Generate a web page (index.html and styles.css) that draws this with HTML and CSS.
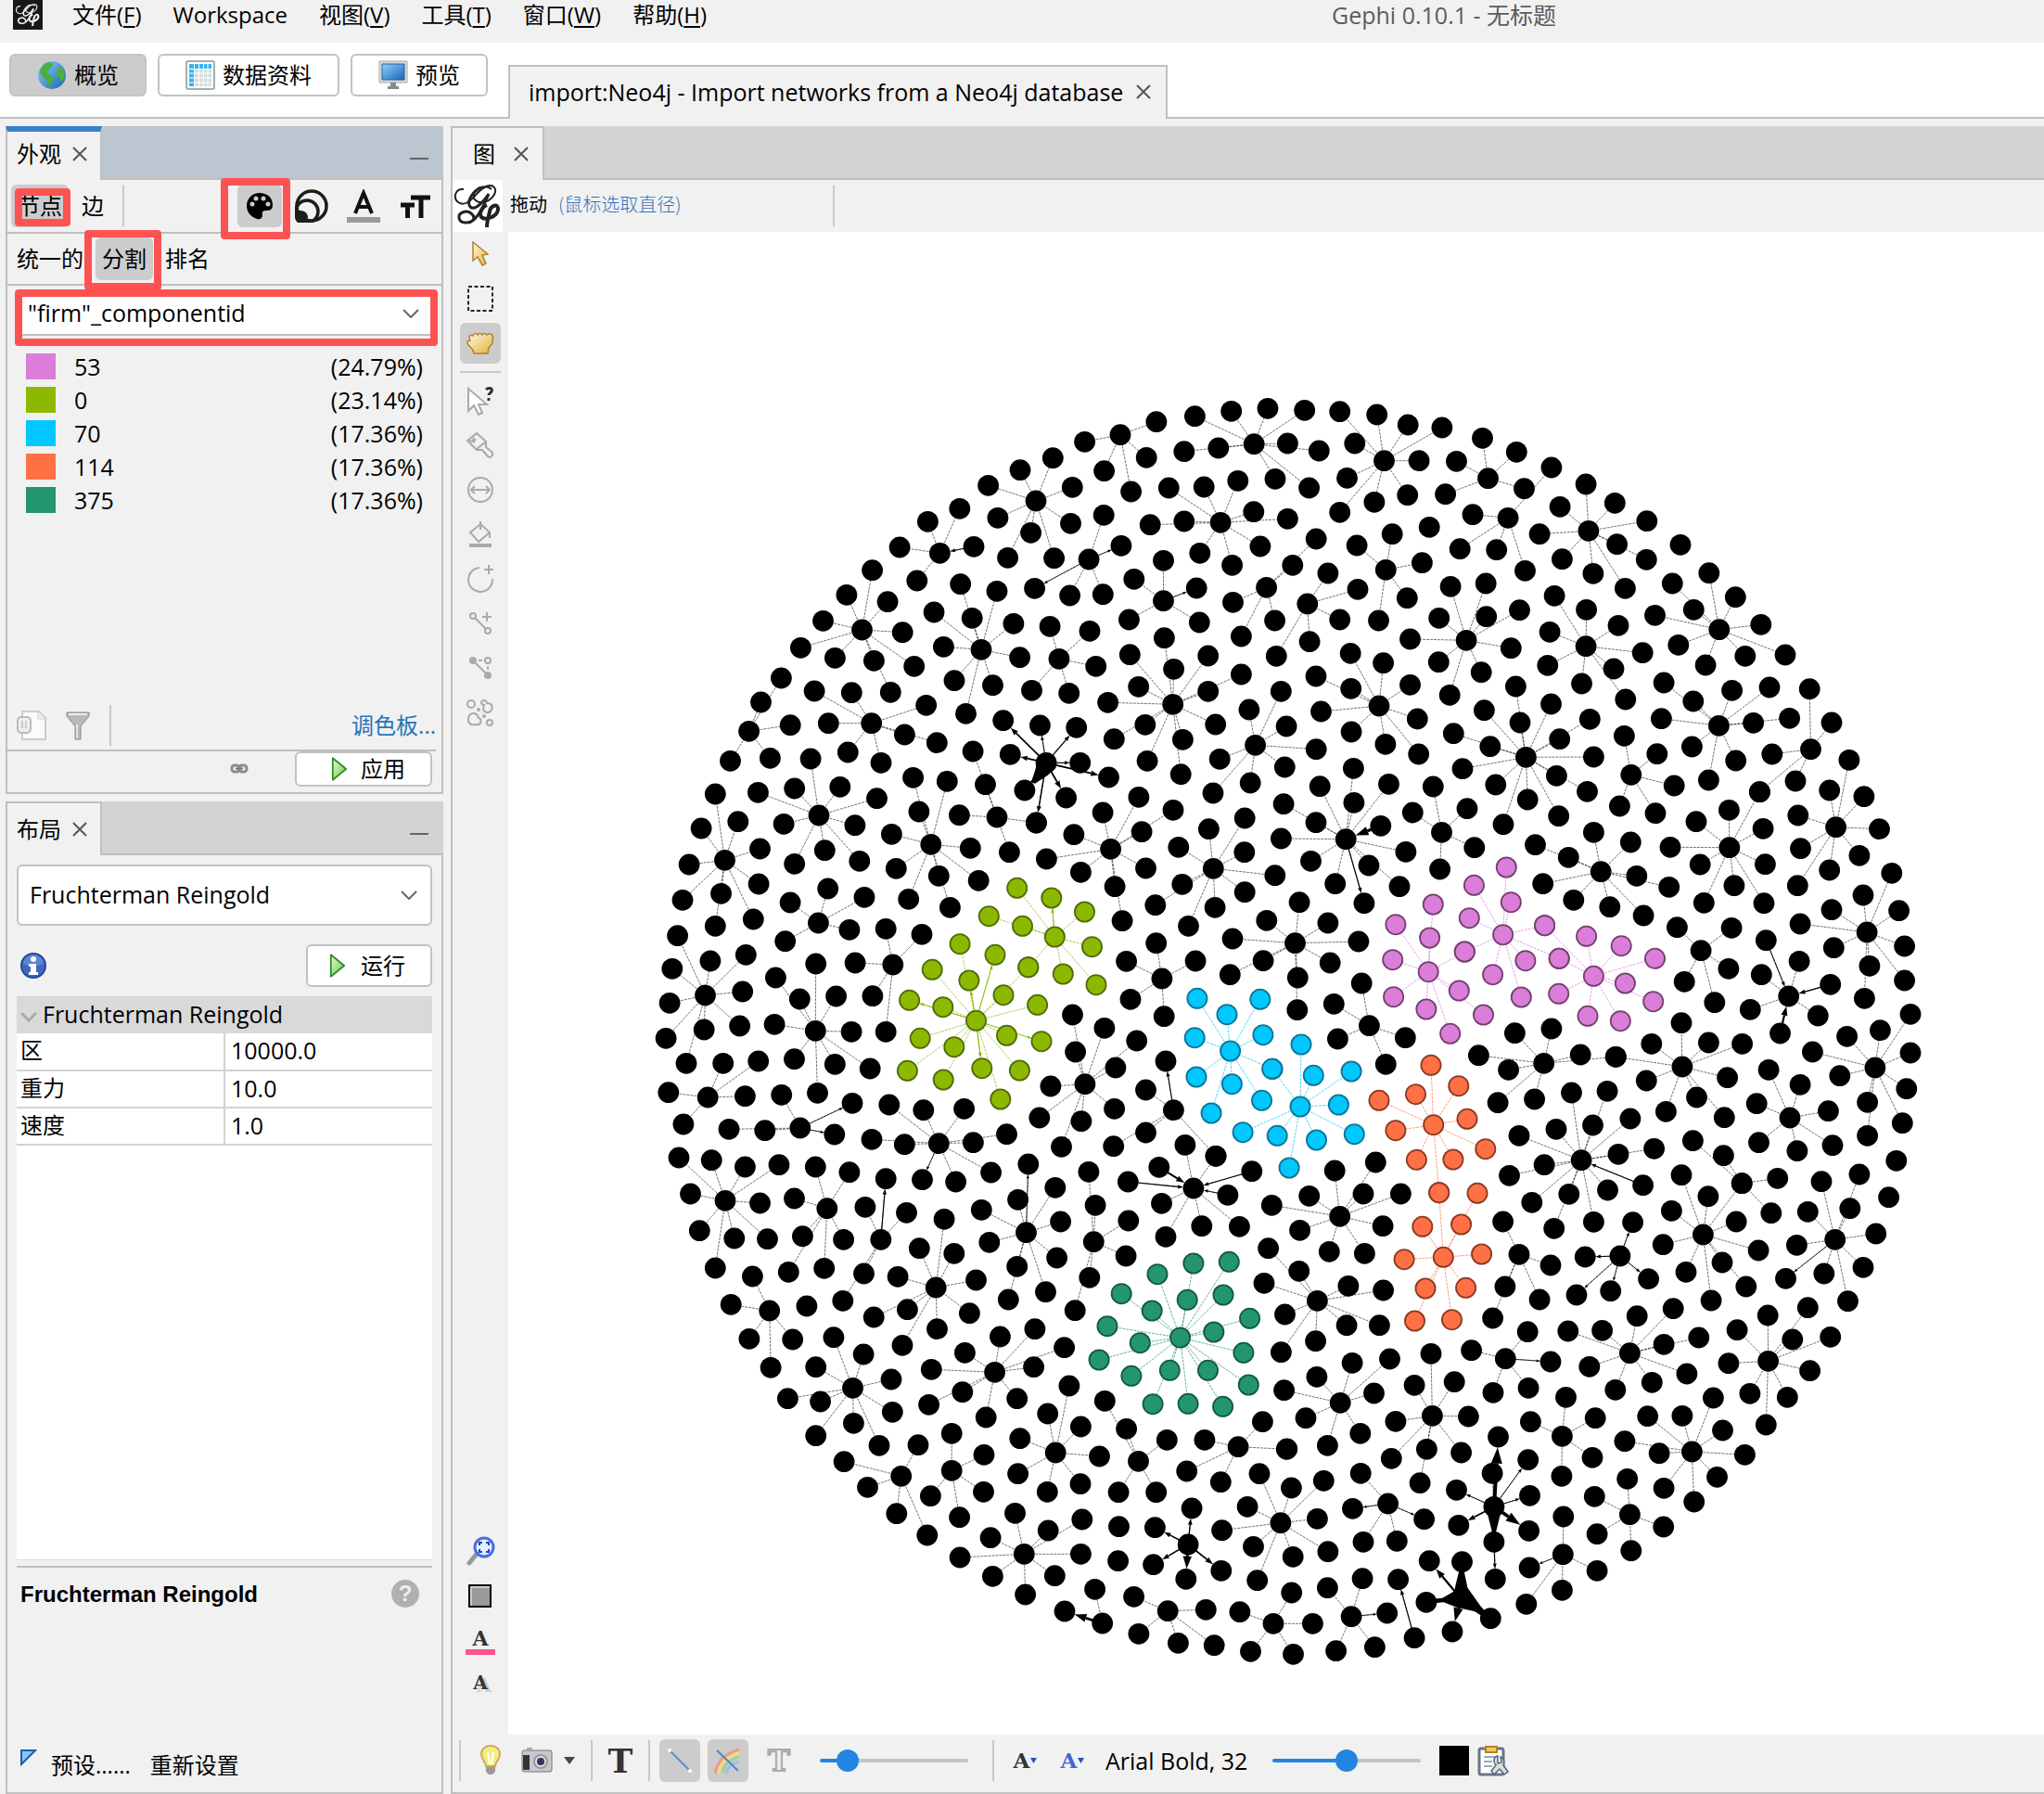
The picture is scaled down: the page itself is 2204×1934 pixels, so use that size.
FILE: index.html
```html
<!DOCTYPE html>
<html lang="zh-CN">
<head>
<meta charset="utf-8">
<title>Gephi 0.10.1 - 无标题</title>
<link rel="stylesheet" href="styles.css">
</head>
<body>
<svg class="defs" aria-hidden="true">
  <defs>
    <linearGradient id="gold" x1="0" y1="0" x2="1" y2="1"><stop offset="0" stop-color="#fffbe8"/><stop offset="1" stop-color="#e0b030"/></linearGradient>
    <linearGradient id="go" x1="0" y1="0" x2="1" y2="1"><stop offset="0" stop-color="#eafbd8"/><stop offset="1" stop-color="#6cc24a"/></linearGradient>
    <linearGradient id="sky" x1="0" y1="0" x2="1" y2="1"><stop offset="0" stop-color="#8fd0ff"/><stop offset="1" stop-color="#1a63b8"/></linearGradient>
    <symbol id="gephi" viewBox="0 0 54 56">
      <path d="M12 10C3 9 0 19 6 24c7 5 14-2 20-9C32 8 41 3 45 8c4 6-4 15-12 16-8 1-13-5-9-11 4-6 13-8 18-3" fill="none" stroke="currentColor" stroke-width="2"/>
      <path d="M30 8C20 14 15 24 19 29c6 5 16-8 20-14-4 9-8 20-15 27-6 6-16 5-17-1-1-6 8-9 13-5 5 4 3 9-3 10" fill="none" stroke="currentColor" stroke-width="3"/>
      <path d="M37 27c-5 2-9 9-6 13 4 4 17 0 18-8 0-8-8-4-9 2-1 5-3 11-3 17" fill="none" stroke="currentColor" stroke-width="4"/>
    </symbol>
    <symbol id="play" viewBox="0 0 20 30"><path d="M2 2v26l16-13z" fill="url(#go)" stroke="#2f8f22" stroke-width="2" stroke-linejoin="round"/></symbol>
    <symbol id="close" viewBox="0 0 16 16"><path d="M1 1l14 14M15 1L1 15" fill="none" stroke="#555" stroke-width="2"/></symbol>
    <symbol id="chev" viewBox="0 0 18 10"><path d="M1 1l8 8 8-8" fill="none" stroke="#666" stroke-width="2"/></symbol>
  </defs>
</svg>

<header class="menubar">
  <svg class="applogo" viewBox="0 0 32 32"><rect width="32" height="32" fill="#16181a"/><use href="#gephi" x="2" y="1" width="28" height="30" color="#eee"/></svg>
  <nav class="menus">
    <button>文件(<u>F</u>)</button>
    <button class="latin">Workspace</button>
    <button>视图(<u>V</u>)</button>
    <button>工具(<u>T</u>)</button>
    <button>窗口(<u>W</u>)</button>
    <button>帮助(<u>H</u>)</button>
  </nav>
  <div class="apptitle">Gephi 0.10.1 - 无标题</div>
</header>

<div class="perspectives">
  <div class="modes">
    <button class="mode mode-on"><svg width="32" height="32" viewBox="0 0 32 32"><circle cx="16" cy="16" r="15" fill="url(#sky)"/><path d="M10 3c6-2 8 1 6 4-3 1-2 4-5 5-1 3 4 3 6 6 2 3-2 5-3 11-3-1-3-6-5-9-3-2-6-4-6-8 1-4 4-8 7-9zM22 5c4 2 7 6 8 11-1 3-2 5-3 7-3-1-2-5-5-6-3-3-1-6 1-7 1-2-1-3-1-5z" fill="#4caf3a"/></svg>概览</button>
    <button class="mode mode-wide"><svg width="32" height="32" viewBox="0 0 32 32"><rect x="1" y="1" width="30" height="30" rx="2" fill="#fff" stroke="#9fb0b0" stroke-width="2"/><path d="M4 4h24v24H4z" fill="#d5dde0"/><path d="M4 4h24v5H4zM4 9h5v19H4z" fill="#35b4ee"/><path d="M4 9.500h24M4 14h24M4 19h24M4 24h24M9.500 4v24M14.500 4v24M19.500 4v24M24 4v24" stroke="#fff" stroke-width="1"/></svg>数据资料</button>
    <button class="mode"><svg width="32" height="32" viewBox="0 0 32 32"><path d="M1 1h30v23H1z" fill="#d9d9d9" stroke="#aaa"/><path d="M4 4h24v17H4z" fill="url(#sky)" stroke="#2a5d9a"/><path d="M13 24h6v4h3v3H10v-3h3z" fill="#8a8a8a"/></svg>预览</button>
  </div>
  <div class="doctab"><span>import:Neo4j - Import networks from a Neo4j database</span><button class="x" aria-label="关闭"><svg width="16" height="16"><use href="#close"/></svg></button></div>
</div>

<main class="desk">
  <div class="side">
    <section class="panel appearance">
      <div class="tabs tabs-active">
        <div class="tab"><span>外观</span><button class="x" aria-label="关闭"><svg width="16" height="16"><use href="#close"/></svg></button></div>
        <button class="min" aria-label="最小化"></button>
      </div>
      <div class="row elements">
        <button class="flat flat-on marked mark-node">节点</button>
        <button class="flat edge-kind">边</button>
        <i class="vsep"></i>
        <div class="aspects">
          <button class="aspect flat-on marked mark-color" aria-label="颜色"><svg width="30" height="30" viewBox="0 0 30 30"><path d="M15 1C7 1 1 7 1 15c0 7 5 12 11 14 4 1 6-1 6-4-1-4 1-5 4-5 4 0 7-1 7-6C29 6 23 1 15 1z" fill="#000"/><g fill="#ccc"><circle cx="7" cy="13" r="2.500"/><circle cx="11" cy="7" r="2.500"/><circle cx="19" cy="7" r="2.500"/><circle cx="24" cy="13" r="2.500"/></g></svg></button>
          <button class="aspect" aria-label="大小"><svg width="36" height="36" viewBox="0 0 36 36"><g fill="none" stroke="#1c1c1a" stroke-width="3.500"><circle cx="18" cy="18" r="16"/><circle cx="13" cy="24" r="12"/></g><path d="M0 26a8 8 0 0 1 14 3c0 3-1 5-3 7H3c-2-2-3-4-3-6z" fill="#1c1c1a"/></svg></button>
          <button class="aspect" aria-label="标签颜色"><svg width="36" height="36" viewBox="0 0 36 36"><path d="M9 26L18 4l9 22M12 19h12" fill="none" stroke="#111" stroke-width="4"/><path d="M0 30h36v6H0z" fill="#999"/></svg></button>
          <button class="aspect" aria-label="标签尺寸"><svg width="34" height="36" viewBox="0 0 34 36"><path d="M12 9h21M23 9v22M1 17h15M8.500 17v14" fill="none" stroke="#111" stroke-width="5"/></svg></button>
        </div>
      </div>
      <div class="row modesrow">
        <button class="flat">统一的</button>
        <button class="flat flat-on marked mark-part">分割</button>
        <button class="flat">排名</button>
      </div>
      <div class="attribute marked mark-attr">
        <select class="latin" aria-label="属性"><option>"firm"_componentid</option></select>
        <svg class="chev" width="18" height="10"><use href="#chev"/></svg>
      </div>
      <ul class="legend latin">
        <li><i class="sw pink"></i><span>53</span><b>(24.79%)</b></li>
        <li><i class="sw lime"></i><span>0</span><b>(23.14%)</b></li>
        <li><i class="sw cyan"></i><span>70</span><b>(17.36%)</b></li>
        <li><i class="sw orange"></i><span>114</span><b>(17.36%)</b></li>
        <li><i class="sw teal"></i><span>375</span><b>(17.36%)</b></li>
      </ul>
      <div class="tools">
        <svg width="32" height="34" viewBox="0 0 32 34"><path d="M6 2h18l7 7v23H6z" fill="#fafafa" stroke="#ccc" stroke-width="2"/><path d="M23 2v8h8" fill="#eee" stroke="#ccc"/><rect x="1" y="8" width="14" height="17" rx="4" fill="#eee" stroke="#bbb" stroke-width="2"/><path d="M6 12v8M10 12v8" stroke="#ccc" stroke-width="2"/></svg>
        <svg width="26" height="32" viewBox="0 0 26 32"><path d="M1 2h24v4L16 17v14h-6V17L1 6z" fill="#b8b8c0" stroke="#8a8a8a"/><path d="M3 4h20" stroke="#eee" stroke-width="2"/><path d="M12 15v15" stroke="#e4e4e4" stroke-width="2"/></svg>
        <i class="vsep"></i>
        <a class="palette" href="#palette">调色板...</a>
      </div>
      <div class="applyrow">
        <svg width="20" height="12" viewBox="0 0 20 12"><g fill="none" stroke="#8c8c8c" stroke-width="3"><rect x="2" y="2" width="8" height="7" rx="3"/><rect x="10" y="2" width="8" height="7" rx="3"/></g><path d="M6 5.500h8" stroke="#777" stroke-width="2"/></svg>
        <button class="push apply"><svg width="18" height="28"><use href="#play"/></svg>应用</button>
      </div>
    </section>

    <section class="panel layout">
      <div class="tabs">
        <div class="tab"><span>布局</span><button class="x" aria-label="关闭"><svg width="16" height="16"><use href="#close"/></svg></button></div>
        <button class="min" aria-label="最小化"></button>
      </div>
      <div class="layoutbody">
        <div class="algo">
          <select class="latin" aria-label="布局算法"><option>Fruchterman Reingold</option></select>
          <svg class="chev" width="18" height="10"><use href="#chev"/></svg>
        </div>
        <div class="runrow">
          <svg width="28" height="28" viewBox="0 0 28 28"><circle cx="14" cy="14" r="13" fill="#3f68bd" stroke="#21499c" stroke-width="2"/><path d="M3 12a11 10 0 0 1 22 0c-7 3-15 3-22 0z" fill="#5f84d0"/><circle cx="14" cy="7" r="3" fill="#fff"/><path d="M9 12h8v9h2v3H9v-3h2v-6H9z" fill="#fff"/></svg>
          <button class="push run"><svg width="18" height="28"><use href="#play"/></svg>运行</button>
        </div>
        <div class="sheet">
          <table>
            <thead><tr><th colspan="2" class="latin"><svg width="18" height="12" viewBox="0 0 18 12"><path d="M1 2l8 8 8-8" fill="none" stroke="#aaa" stroke-width="3"/></svg>Fruchterman Reingold</th></tr></thead>
            <tbody>
              <tr><td>区</td><td class="latin">10000.0</td></tr>
              <tr><td>重力</td><td class="latin">10.0</td></tr>
              <tr><td>速度</td><td class="latin">1.0</td></tr>
            </tbody>
          </table>
        </div>
        <div class="about">
          <h2>Fruchterman Reingold</h2>
          <button class="help" aria-label="帮助">?</button>
        </div>
        <div class="presets">
          <svg width="18" height="18" viewBox="0 0 18 18"><path d="M1 1h15L1 16z" fill="#8fc4ee" stroke="#1463ad" stroke-width="2"/></svg>
          <button class="flat">预设......</button>
          <button class="flat">重新设置</button>
        </div>
      </div>
    </section>
  </div>

  <section class="panel graph">
    <div class="tabs">
      <div class="tab tab-graph"><span>图</span><button class="x" aria-label="关闭"><svg width="16" height="16"><use href="#close"/></svg></button></div>
    </div>
    <div class="toolinfo">
      <svg class="brand" width="54" height="56"><use href="#gephi" color="#222"/></svg>
      <span class="tooltext">拖动</span><span class="toolhint">(鼠标选取直径)</span>
      <i class="vsep"></i>
    </div>
    <div class="stage">
      <div class="toolcol">
        <button class="tool" aria-label="选择"><svg width="32" height="32" viewBox="0 0 32 32"><path d="M8 3v20l5-4 5 9 4-2-4-9 6-1z" fill="url(#gold)" stroke="#b08030" stroke-width="1.500"/></svg></button>
        <button class="tool" aria-label="矩形选择"><svg width="32" height="32" viewBox="0 0 32 32"><rect x="3" y="3" width="26" height="26" fill="none" stroke="#222" stroke-width="2" stroke-dasharray="4 2.500"/></svg></button>
        <button class="tool flat-on" aria-label="拖动"><svg width="32" height="32" viewBox="0 0 32 32"><path d="M9 27h15l1-6 4-5c1-6 1-9-2-10-2-1-3 0-4 1-1-2-4-2-5 0-1-2-4-2-5 0-1-2-4-2-5 1-3-2-5 1-3 5l-3 1c-1 3 2 5 4 7 2 2 3 4 3 6z" fill="url(#gold)" stroke="#b08030" stroke-width="1.500"/></svg></button>
        <i class="hsep"></i>
        <button class="tool" aria-label="编辑"><svg width="32" height="32" viewBox="0 0 32 32"><path d="M3 3v24l6-6 5 10 4-2-4-9h9z" fill="#fff" stroke="#aaa" stroke-width="2"/><path d="M22 4c3-3 8-1 6 2-1 2-3 2-3 4M25 13v3" fill="none" stroke="#333" stroke-width="3"/></svg></button>
        <button class="tool" aria-label="画笔"><svg width="32" height="32" viewBox="0 0 32 32" class="ol"><path d="M2 11L12 3l10 9v6l6 5c3 3-1 8-4 5l-6-7h-6zM12 20l10-8M4 11l4 1M8 8l3 3M7 10l3 3"/></svg></button>
        <button class="tool" aria-label="尺寸"><svg width="32" height="32" viewBox="0 0 32 32" class="ol"><circle cx="16" cy="16" r="13"/><path d="M6 16h20M10 12l-4 4 4 4M22 12l4 4-4 4"/></svg></button>
        <button class="tool" aria-label="填充"><svg width="32" height="32" viewBox="0 0 32 32" class="ol"><path d="M16 5l10 9-12 10-9-10zM16 2v9M26 14v6"/><path d="M4 28h24" stroke-width="4"/></svg></button>
        <button class="tool" aria-label="添加节点"><svg width="32" height="32" viewBox="0 0 32 32" class="ol"><path d="M15 4a13 13 0 1 0 14 12M25 1v10M20 6h10"/></svg></button>
        <button class="tool" aria-label="添加边"><svg width="32" height="32" viewBox="0 0 32 32" class="ol"><circle cx="8" cy="8" r="3"/><circle cx="24" cy="24" r="3"/><path d="M10 10l12 12M23 4v10M18 9h10"/></svg></button>
        <button class="tool" aria-label="最短路径"><svg width="32" height="32" viewBox="0 0 32 32" class="ol"><circle cx="8" cy="8" r="3" fill="#aaa"/><circle cx="24" cy="24" r="3" fill="#aaa"/><circle cx="24" cy="8" r="3"/><path d="M10 10l12 12M14 8h4M24 14v4"/></svg></button>
        <button class="tool" aria-label="热图"><svg width="32" height="32" viewBox="0 0 32 32" class="ol"><circle cx="6" cy="7" r="4"/><path d="M17 5c2-4 6-1 6 1 8-1 7 11 0 10-5-1-4-5-3-8-2 0-3-1-3-3zM3 24c0-9 9-9 11-2 4 1 3 8-2 7-5 1-9 0-9-5z"/><circle cx="26" cy="27" r="3"/><circle cx="14" cy="13" r="1"/><circle cx="20" cy="20" r="1"/></svg></button>
        <div class="toolfoot">
          <button class="tool" aria-label="居中"><svg width="32" height="32" viewBox="0 0 32 32"><path d="M4 29l9-11" stroke="#999" stroke-width="5" stroke-linecap="round"/><circle cx="20" cy="12" r="10" fill="#e6eeff" stroke="#4a6fdc" stroke-width="3"/><path d="M15 10V7h3M22 7h3v3M25 14v3h-3M18 17h-3v-3" fill="none" stroke="#2244bb" stroke-width="2"/></svg></button>
          <button class="tool" aria-label="背景色"><svg width="32" height="32" viewBox="0 0 32 32"><rect x="4" y="5" width="23" height="23" fill="#999" stroke="#000" stroke-width="2"/><path d="M6 27V7h20" fill="none" stroke="#fff"/></svg></button>
          <button class="tool label-tool pinkline" aria-label="标签色">A</button>
          <button class="tool label-tool shadow" aria-label="标签阴影">A</button>
        </div>
      </div>
      <div class="canvas">
        <svg id="graph" viewBox="548 250 1656 1620"></svg>
      </div>
    </div>
    <footer class="viz">
      <i class="vsep"></i>
      <button class="vb bulb" aria-label="灯光"><svg width="32" height="34" viewBox="0 0 32 34"><path d="M11 23c0-5-5-7-5-13C6-2 26-2 26 10c0 6-5 8-5 13z" fill="#f0ee80" stroke="#cfa860" stroke-width="2"/><path d="M11 24h10v5l-3 3h-4l-3-3z" fill="#999"/><path d="M13 8l2 13M19 8l-2 13" stroke="#fff" stroke-width="2"/></svg></button>
      <button class="vb cam" aria-label="截图"><svg width="34" height="30" viewBox="0 0 34 30"><rect x="1" y="4" width="32" height="23" rx="2" fill="#c8c8cc" stroke="#777"/><path d="M2 9h7v16H2z" fill="#333"/><path d="M6 1h6v3H6z" fill="#aaa"/><circle cx="21" cy="16" r="8" fill="#999"/><circle cx="21" cy="16" r="6" fill="#ddd"/><circle cx="21" cy="16" r="4" fill="#336"/></svg><svg width="12" height="8" viewBox="0 0 12 8"><path d="M0 0h12L6 8z" fill="#445"/></svg></button>
      <i class="vsep"></i>
      <button class="vb bigt" aria-label="节点标签">T</button>
      <i class="vsep thin"></i>
      <button class="vb toggle" aria-label="显示边"><svg width="32" height="32" viewBox="0 0 32 32"><path d="M5 5l22 22" stroke="#5b8fd0" stroke-width="2"/><circle cx="5" cy="5" r="2" fill="#fff"/><circle cx="27" cy="27" r="2" fill="#fff"/></svg></button>
      <button class="vb toggle" aria-label="边颜色"><svg width="32" height="32" viewBox="0 0 32 32"><g fill="none" stroke-width="3"><path d="M2 30C4 16 14 8 28 4" stroke="#ef9a8a"/><path d="M6 30c1-11 10-19 22-22" stroke="#f0dc80"/><path d="M10 30c1-9 8-15 18-18" stroke="#9bd69b"/><path d="M14 30c1-6 6-11 14-13" stroke="#a8b8ee"/></g><path d="M4 5l23 22" stroke="#4a88cc" stroke-width="2"/></svg></button>
      <button class="vb bigt outline" aria-label="边标签">T</button>
      <input class="slider s1" type="range" min="0" max="100" value="13" aria-label="边粗细">
      <i class="vsep before-fonts"></i>
      <button class="vb fonta" aria-label="字号模式">A<svg width="7" height="6" viewBox="0 0 7 6"><path d="M0 0h7L3.500 6z" fill="#2a50c8"/></svg></button>
      <button class="vb fonta blue" aria-label="颜色模式">A<svg width="7" height="6" viewBox="0 0 7 6"><path d="M0 0h7L3.500 6z" fill="#2a50c8"/></svg></button>
      <button class="flat latin fontname">Arial Bold, 32</button>
      <input class="slider s2" type="range" min="0" max="100" value="50" aria-label="字体大小">
      <button class="black" aria-label="字体颜色"></button>
      <button class="vb" aria-label="设置"><svg width="34" height="34" viewBox="0 0 34 34"><rect x="2" y="4" width="26" height="28" rx="2" fill="#fff" stroke="#667788" stroke-width="3"/><path d="M9 2h12v6H9z" fill="#f3c860" stroke="#b8801c" stroke-width="2"/><path d="M7 13h12M7 18h9M7 23h9" stroke="#9ab" stroke-width="2"/><path d="M22 12c-5 1-5 7-2 10l-5 6 3 4 6-6 5 6 4-3-5-7c1-3 1-8-3-9l1 6-4 1z" fill="#ddd" stroke="#556677" stroke-width="1.500"/></svg></button>
    </footer>
  </section>
</main>
<script src="graph.js"></script>
</body>
</html>
```
FILE: styles.css
```css
* { box-sizing: border-box; }
body {
  margin: 0;
  min-height: 100vh;
  display: flex;
  flex-direction: column;
  background: #f1f1f1;
  color: #000;
  font: 24px/32px "Open Sans", "Noto Sans CJK SC", sans-serif;
}
button, select { font: inherit; color: inherit; border: 0; background: none; padding: 0; margin: 0; white-space: nowrap; }
svg { display: block; flex: none; }
.defs { position: absolute; width: 0; height: 0; }
.latin { font-size: 25px; }
.vsep { width: 2px; height: 44px; background: #c8c8c8; flex: none; }

.menubar { height: 46px; display: flex; align-items: flex-start; padding-left: 14px; }
.applogo { width: 32px; height: 32px; }
.menus { display: flex; gap: 34px; padding-left: 32px; }
.menus .latin { font-size: 24px; }
.menus u { text-underline-offset: 3px; text-decoration-thickness: 2px; }
.apptitle { flex: 1; padding-left: 674px; color: #5c5c5c; font-size: 25px; }

.perspectives { height: 82px; display: flex; background: #fff; border-bottom: 2px solid #bfbfbf; padding-left: 10px; }
.modes { display: flex; gap: 12px; width: 538px; padding-top: 12px; flex: none; }
.mode { width: 148px; height: 46px; display: flex; align-items: center; justify-content: center; gap: 8px; border: 2px solid #c2c2c2; border-radius: 6px; background: #fff; }
.mode-wide { width: 196px; }
.mode-on { background: #ccc; border-color: #c4c4c4; }
.doctab { align-self: flex-end; height: 58px; margin-bottom: -2px; display: flex; align-items: center; gap: 14px; padding: 0 16px 2px 20px; background: #f1f1f1; border: 2px solid #bfbfbf; border-bottom: 0; font-size: 25px; white-space: nowrap; }

.desk { flex: 1; display: grid; grid-template-columns: 472px minmax(0, 1fr); gap: 8px; padding: 8px 0 0 6px; }
.side { display: flex; flex-direction: column; gap: 8px; }
.panel { display: flex; flex-direction: column; border: 2px solid #bfbfbf; border-top: 0; min-width: 0; }
.graph { border-right: 0; }
.appearance { height: 720px; }
.layout { flex: 1; }
.tabs { display: flex; justify-content: space-between; height: 58px; margin: 0 -2px; background: #d3d3d3; border-bottom: 2px solid #bfbfbf; flex: none; }
.tabs-active { background: #bcc6d0; }
.tab { height: 58px; width: 104px; display: flex; align-items: center; gap: 12px; padding-left: 10px; background: #f1f1f1; border: 2px solid #bfbfbf; border-bottom: 0; }
.tabs-active .tab { border-top: 6px solid #3a80c4; padding-bottom: 4px; }
.tab-graph { width: 101px; padding-left: 22px; gap: 20px; }
.graph .tabs { margin-right: 0; }
.min { width: 20px; height: 2px; margin: 34px 16px 0 0; background: #666; }

.flat { border-radius: 6px; }
.flat-on { background: #ccc; border-radius: 6px; }
.row { display: flex; align-items: center; height: 58px; border-bottom: 2px solid #bfbfbf; flex: none; }
.elements { padding-left: 4px; }
.elements .flat { height: 46px; width: 62px; }
.elements .edge-kind { width: 52px; margin-right: 6px; }
.aspects { display: flex; align-items: center; margin-left: auto; padding-right: 4px; gap: 8px; }
.aspect { width: 48px; height: 46px; display: grid; place-items: center; }
.modesrow { height: 56px; padding-left: 10px; gap: 13px; }
.mark-part { width: 62px; height: 46px; }
.marked { position: relative; }
.marked::after { content: ""; position: absolute; border: 8px solid #fd5252; border-radius: 4px; pointer-events: none; z-index: 2; }
.mark-node::after { inset: 4px -2px 1px 4px; }
.mark-color::after { inset: -7px -9px -13px -18px; }
.mark-part::after { inset: -8px -9px -11px -12px; }
.attribute { margin: 8px 10px 0 14px; height: 46px; }
.mark-attr::after { inset: -4px -6px -13px -6px; }
.attribute, .algo { display: flex; align-items: center; flex: none; }
.attribute { background: #fff; border-bottom: 2px solid #bfbfbf; }
.attribute select, .algo select { appearance: none; width: 100%; height: 100%; padding-left: 8px; padding-bottom: 2px; }
.chev { margin-left: -32px; margin-right: 10px; pointer-events: none; }
.legend { list-style: none; margin: 15px 20px 0 20px; padding: 0; flex: 1; }
.legend li { display: flex; align-items: center; height: 36px; }
.legend b { font-weight: 400; margin-left: auto; }
.sw { width: 32px; height: 28px; margin-right: 20px; }
.pink { background: #da7ed9; } .lime { background: #8cb900; } .cyan { background: #00c7ff; } .orange { background: #ff7045; } .teal { background: #24966e; }
.tools { display: flex; align-items: center; height: 54px; gap: 21px; margin-right: 6px; padding-left: 10px; border-bottom: 2px solid #bfbfbf; }
.palette { margin-left: auto; color: #2a74b8; text-decoration: none; }
.applyrow { display: flex; align-items: center; justify-content: flex-end; height: 44px; padding: 0 10px 6px 0; gap: 50px; }
.push { display: flex; align-items: center; justify-content: center; gap: 14px; background: #fff; border: 2px solid #c2c2c2; border-radius: 6px; padding-left: 10px; }
.apply { width: 148px; height: 38px; }
.run { width: 136px; height: 46px; gap: 16px; padding: 0 4px 0 0; }

.layoutbody { flex: 1; display: flex; flex-direction: column; padding: 10px 10px 12px; }
.algo { height: 66px; background: #fff; border: 2px solid #c2c2c2; border-radius: 6px; }
.algo select { padding-left: 12px; }
.runrow { display: flex; justify-content: space-between; align-items: center; padding: 20px 0 10px 4px; }
.sheet { flex: 1; background: #fff; border-bottom: 1px solid #ddd; }
table { width: 100%; border-collapse: collapse; table-layout: fixed; }
th { height: 40px; padding: 0 4px 2px; background: #d9d9d9; font-weight: 400; text-align: left; }
th svg { display: inline-block; margin-right: 6px; vertical-align: middle; }
td { height: 40px; padding: 0 4px 3px; border-bottom: 2px solid #d3d3d3; }
td + td { border-left: 2px solid #d3d3d3; padding-left: 6px; }
.about { display: flex; justify-content: space-between; align-items: flex-start; height: 198px; margin-top: 6px; border-top: 2px solid #bfbfbf; padding: 13px 14px 0 4px; }
h2 { margin: 0; font: bold 24px/32px "Liberation Sans", Arial, sans-serif; }
.help { width: 30px; height: 30px; border-radius: 15px; background: #b0b0b0; color: #eee; font: bold 24px/30px "Liberation Sans", sans-serif; }
.presets { display: flex; height: 34px; gap: 21px; padding-left: 4px; }
.presets svg { margin-right: -6px; }

.toolinfo { display: flex; align-items: center; height: 56px; }
.brand { background: #fff; }
.tooltext, .toolhint { font: 20px/28px "Noto Sans CJK SC", sans-serif; }
.tooltext { margin: 0 12px 4px 8px; }
.toolhint { color: #3273be; margin-bottom: 4px; width: 296px; font-weight: 300; }
.stage { flex: 1; display: flex; min-height: 0; }
.toolcol { width: 60px; display: flex; flex-direction: column; align-items: center; gap: 4px; flex: none; padding-top: 2px; }
.tool { width: 44px; height: 44px; display: grid; place-items: center; flex: none; }
.hsep { width: 44px; height: 2px; margin: 4px 0; background: #c8c8c8; }
.toolfoot { margin-top: auto; padding-bottom: 34px; display: flex; flex-direction: column; gap: 4px; }
.ol { fill: none; stroke: #aaa; stroke-width: 2; }
.label-tool { font: bold 22px/24px "DejaVu Serif", serif; color: #333; height: 44px; }
.pinkline { display: block; width: 32px; height: 30px; margin: 8px 6px 4px; border-bottom: 6px solid #ff5588; line-height: 20px; }
.shadow { font-size: 20px; text-shadow: 4px 3px 0 #ccc; }
.canvas { flex: 1; background: #fff; min-width: 0; display: flex; }
.canvas svg { width: 100%; height: 100%; }

.viz { display: flex; align-items: center; height: 62px; padding-left: 7px; padding-bottom: 6px; flex: none; }
.vb { display: flex; align-items: center; justify-content: center; flex: none; }
.bulb { width: 64px; }
.cam { gap: 12px; width: 60px; margin-right: 16px; }
.bigt { width: 60px; font: bold 36px/44px "DejaVu Serif", serif; color: #333; }
.outline { width: 50px; font-size: 32px; color: #eee; -webkit-text-stroke: 2px #aaa; }
.thin { margin-right: 10px; }
.toggle { width: 44px; height: 46px; border-radius: 6px; background: #ccc; margin-right: 8px; }
.fonta { width: 51px; gap: 1px; font: bold 23px/32px "DejaVu Serif", serif; color: #333; }
.before-fonts { margin-right: 8px; }
.blue { color: #4466cc; }
.fontname { margin: 0 27px 0 10px; }
.black { width: 32px; height: 32px; background: #000; margin: 0 9px 0 20px; }
.slider { appearance: none; width: 160px; height: 24px; margin: 0; background: none; flex: none; }
.slider::-webkit-slider-runnable-track { height: 4px; border-radius: 2px; }
.slider::-webkit-slider-thumb { appearance: none; width: 24px; height: 24px; margin-top: -10px; border-radius: 12px; background: #2285e1; }
.s1::-webkit-slider-runnable-track { background: linear-gradient(to right, #2285e1 20%, #c4c4c4 20%); }
.s2::-webkit-slider-runnable-track { background: linear-gradient(to right, #2285e1 50%, #c4c4c4 50%); }
.s1 { margin: 0 26px 0 19px; }

.edge { stroke: #000; stroke-width: 1; stroke-opacity: .55; stroke-dasharray: 3 1; }
.edge.soft { stroke-opacity: .7; }
```
FILE: graph.js
```js
// Each tile has an origin and a scale; every star lists its hub first, then its neighbours.
const TILES = [
  { x: 700, y: 420, s: 2.24, stars: [
    '1138,146 1225,104 1052,169 1201,220 1099,263 1164,330',
    '1461,176 1318,86 1406,70 1494,61 1583,67 1375,189 1292,200 1542,174 1512,289 1618,198 1594,318',
    '934,360 975,221 896,260 819,310 1022,316 842,415 1018,433 922,463 866,544 978,545',
    '702,529 750,385 673,427 605,510 784,508 647,618',
    '1062,549 1098,406 1140,505 931,643 1016,666 1096,662',
    '1380,430 1255,318 1340,315 1422,295 1460,395 1542,418 1292,426 1210,437 1330,529 1476,507 1408,568',
    '1242,683 1242,553 1171,613 1322,642 1159,744 1329,753',
    '1491,640 1554,568 1410,688 1511,747 1430,798 1611,483',
    '514,777 539,584 477,664 576,686 420,748 612,785 366,835 449,868 543,877 640,895 583,979',
    '802,841 752,629 840,652 688,720 780,739 880,757 711,832 895,866 737,941 830,956 765,1048',
    '990,871 968,766 1064,781 1079,895 924,973 1014,982',
    '1265,1018 1244,803 1161,857 1350,861 1267,904 1430,921 1182,961 1350,976 1108,1012 1368,1083 1198,1084 1123,1130 1289,1132 1203,1201 1284,1244',
    '241,1105 319,933 270,1011 341,1085 196,1201 292,1192',
    '537,1079 399,975 489,980 669,1021 433,1079 617,1116 695,1142 480,1173 560,1207',
    '959,1207 855,1070 944,1086 1032,1093 872,1180 1041,1207 1110,1254 907,1296 1007,1320 935,1401',
    '1464,1150 1526,976 1449,1035 1539,1089 1378,1195 1535,1221 1452,1272 1362,1305 1611,1163',
    '410,1377 390,1194 351,1290 461,1285 263,1303 550,1322 325,1405 497,1409 351,1534 424,1490 508,1525',
    '840,1383 812,1277 782,1170 749,1376 935,1401 870,1496'
  ], arrows: [
    [959,1207,855,1070,2],[959,1207,944,1086,1],[959,1207,1032,1093,1.4],[959,1207,872,1180,1.8],[959,1207,1041,1207,1.2],
    [959,1207,1110,1254,2],[959,1207,1007,1320,2],[959,1207,935,1401,1.6],[959,1207,907,1296,4],
    [784,508,702,529,1.2],[1062,549,1140,505,.8],[1062,549,931,643,.8],[1242,683,1322,642,.8]
  ], shapes: ['935,1205 983,1222 962,1248 932,1274 920,1270 932,1250'] },

  { x: 1380, y: 420, s: 2.178, stars: [
    '245,230 141,71 228,81 301,114 381,123 176,174 327,230 158,286 300,341 222,364 141,397',
    '489,287 476,157 556,202 415,232 389,338 574,320',
    '536,415 638,252 453,404 423,515 509,518 576,586',
    '725,457 719,306 658,379 787,367 862,425 610,467 792,500 861,550 663,548 736,595 811,643',
    '941,502', '351,445',
    '249,583 181,504 264,467 334,560 299,674 232,747',
    '65,693 113,594 183,646 141,744 70,815 -8,862',
    '438,811 401,637 484,627 374,739 485,734 563,713 306,807 543,836 373,881 473,914 399,988',
    '719,830 645,667 720,712 795,763 634,784 852,851 629,892 784,903 709,951 812,1002',
    '1032,776 1008,593 922,627 1070,671 972,712 881,730 1130,760 936,826 1187,858 1093,862 1000,891',
    '233,1023 166,853 243,884 85,927 167,967 306,955 97,1041 323,1065 168,1107 248,1147 326,1179',
    '578,1189 554,960 480,1037 637,1017 564,1077 728,1066 657,1130 408,1112 494,1154 737,1188 429,1226 650,1249 722,1300 507,1278 582,1326 655,1379 525,1406',
    '1031,1087 902,948 971,1008 1062,973 1150,963 896,1064 1112,1078 1197,1063 968,1155 1071,1200 1007,1263',
    '1247,1163 1244,968 1296,1077 1156,1179 1211,1266 1127,1301',
    '825,1246 809,1120 886,1178 926,1281 798,1347 882,1370',
    '1306,1415 1337,1198 1291,1296 1372,1316 1217,1377 1408,1421 1223,1484 1361,1507 1291,1554 1216,1604'
  ] },

  { x: 690, y: 890, s: 2.24, stars: [
    '703,61 660,-155 742,-143 674,-45 608,28 798,73 619,139 722,163 649,238 818,178 749,265',
    '205,112 182,-102 148,9 237,-13 290,75 119,126 287,189 196,220 103,241 182,325 274,303',
    '1137,76 1118,-42 1205,-92 1288,-50 1212,20 1048,29 982,108 1065,151 1222,138 1147,197 1165,308',
    '1385,139 1301,70 1374,11 1461,-24 1460,86 1310,190 1245,257 1461,215 1534,161 1389,265 1325,325',
    '158,549 91,356 170,438 256,418 78,463 72,574 248,537 155,660 241,648 63,688 112,769',
    '431,315 454,204 363,249 542,232 506,337 351,374',
    '611,450 594,334 681,352 520,444 562,551 594,667',
    '424,664 425,447 328,492 386,561 474,552 325,643 511,667 373,755 471,772 556,786 429,865',
    '164,879 201,769 286,762 69,863 254,875 105,966',
    '387,978 342,871 513,898 302,986 215,982 470,999',
    '722,1028 602,903 685,920 783,916 560,1015 639,1031 805,1025 886,998 682,1145 763,1152 848,1122',
    '1075,836 1045,612 1122,655 1200,696 1052,732 1149,783 992,843 1146,916 965,945 1066,956 1018,1039',
    '1261,495 1247,380 1175,439 1342,438 1185,562 1266,617',
    '1289,920 1270,762 1222,855 1222,993 1144,1037 1391,1069',
    '1337,1173 1317,1033 1254,1105 1179,1152 1478,1118 1260,1222 1420,1195 1270,1330 1357,1295 1448,1297 1391,1069',
    '206,1213 94,1074 173,1082 254,1104 336,1097 122,1191 290,1221 144,1310 228,1335 308,1337 182,1431',
    '452,1238 424,1104 506,1121 373,1206 393,1328 492,1339 445,1432 359,1444',
    '582,1339 594,1142 544,1234 644,1252 541,1449 490,1537',
    '933,1316 938,1095 1003,1171 913,1210 825,1243 1016,1281 844,1348 1007,1398 911,1426 890,1533 980,1508',
    '1096,1346 1084,1120 1100,1228 1180,1278 1174,1392 1086,1462 1051,1568',
    'cyan 1426,729 1346,559 1498,562 1418,611 1340,686 1505,677 1344,813 1528,787 1430,836 1380,930 1502,889',
    'lime 1002,360 911,202 994,234 1074,279 843,293 924,325 1092,392 938,458 1022,480 1102,515',
    'lime 812,631 773,383 858,418 706,466 795,501 878,548 938,458 651,565 732,587 960,580 886,679 970,698 677,688 759,716 646,793 733,822 826,785 917,792 871,885'
  ], arrows: [
    [582,1339,594,1142,1.3],[1289,920,1270,762,1.2],[1254,1105,1337,1173,2.2],[1179,1152,1337,1173,1.2],[1478,1118,1337,1173,1.2],
    [1420,1195,1337,1173,1],[722,1028,682,1145,.8],[387,978,470,999,.8],[387,978,513,898,.8],[933,1316,938,1095,.8],
    [812,631,858,418,1,'lime'],[812,631,795,501,1,'lime'],[812,631,651,565,1,'lime'],[812,631,826,785,1.2,'lime'],[812,631,970,698,.8,'lime'],[1002,360,994,234,1,'lime']
  ] },

  { x: 1380, y: 890, s: 2.178, stars: [
    '155,44 173,-185 94,-127 256,-134 174,-74 9,-70 85,-10 237,1 3,42 73,115 209,129 296,85 130,188 281,197 198,251',
    '380,22 360,-126 312,-42 440,-55 457,71 376,141',
    '754,149 737,22 824,54 600,62 678,103 838,163 914,199 618,188 690,241 775,263 854,291',
    '1056,71 1055,-50 978,-13 1135,10 1127,-109 917,70 987,126 1140,125 1067,194 996,250 1137,251',
    '36,380 -31,307 -111,366 -39,437 -117,482 46,248 113,315 185,375 118,444 42,492 41,596',
    'cyan 48,909 50,708 79,808 168,795 138,903 175,998 86,1017 22,1107 -6,1003 -87,992 -18,787',
    '141,1264 129,1116 225,1089 69,1198 196,1191 284,1191 47,1309 242,1295 116,1378 199,1384 -19,1228',
    'pink 524,353 532,135 456,193 543,248 445,299 622,323 434,408 577,437 500,482 567,555 656,430',
    'pink 349,473 360,255 272,320 352,363 434,408 265,434 421,534 478,612 267,554 344,594 400,673',
    'pink 737,487 720,358 802,389 881,430 622,323 656,430 811,510 877,569 655,544 723,616 800,632',
    'orange 361,968 355,775 420,842 319,869 233,889 440,949 272,986 483,1046 321,1081 407,1080 374,1187',
    'orange 384,1396 374,1187 464,1189 426,1290 335,1297 474,1386 292,1403 342,1497 437,1495 317,1602 404,1598',
    '210,647 192,510 127,577 136,690 295,686 249,772',
    '989,404 933,329 1061,331 1054,463 950,505 1021,572',
    '1195,552 1142,371 1220,439 1131,482 1293,514 1105,595 1264,615 1175,672',
    '1379,345 1437,154 1370,225 1454,275 1296,272 1222,318 1301,395 1467,390 1385,454 1467,501 1373,559',
    '620,769 552,671 638,657 467,743 537,790 706,741 789,748 598,885 512,896',
    '945,780 943,638 873,706 1007,702 1086,706 789,748 861,825 1051,815 979,879 907,925 1044,944',
    '1398,783 1481,610 1410,662 1332,682 1251,732 1481,735 1315,809 1472,851 1380,895 1462,962 1380,1003',
    '1198,945 1148,790 1222,838 1120,899 1288,923 1125,1025 1215,1052 1298,1034',
    '708,1082 685,864 769,859 823,948 735,969 649,982 562,1003 621,1097 539,1132 795,1063 879,1045 853,1163 679,1192 592,1219 770,1179 737,1282 644,1303',
    '1085,1157 970,1019 1042,1067 1169,1141 1154,1253',
    '994,1323 943,1130 1006,1199 920,1246 1072,1281 900,1355 1124,1374 1039,1413 1095,1491 954,1444 1013,1536 1085,1157',
    '1448,1084', '1430,1202',
    '1304,1339 1272,1151 1361,1128 1339,1238 1240,1249 1400,1320 1214,1357 1188,1465 1278,1449 1370,1429 1334,1538',
    '562,1387 524,1281 636,1422 529,1491 500,1593 610,1533',
    '799,1392 829,1283 717,1395 697,1518 777,1505 866,1466'
  ], arrows: [
    [237,1,155,44,3.5],[155,44,198,251,1.3],[1142,371,1195,552,1.1],[1293,514,1195,552,1.6],[1175,672,1195,552,2.4],
    [853,1163,708,1082,1.2],[799,1392,829,1283,.9],[799,1392,717,1395,1.2],[799,1392,697,1518,.8],[799,1392,777,1505,.8],
    [799,1392,866,1466,1],[1304,1339,1188,1465,.8]
  ] },

  { x: 690, y: 1360, s: 2.24, stars: [
    '715,84 735,-137 675,-43 759,-26 623,49 812,60 646,155 565,180 796,167 718,218 634,271',
    'teal 1305,246 1337,6 1423,1 1250,41 1163,104 1322,124 1409,108 1237,159 1129,209 1386,228 1473,184 1208,263 1458,295 1109,318 1187,370 1280,352 1372,352 1470,399 1239,461 1324,460 1408,469',
    '313,159 272,48 220,139 264,250 369,252 316,343', '403,144',
    '514,409 468,245 540,300 425,341 607,381 357,443 436,453 610,487 516,523 425,563 578,595',
    '857,358 954,218 870,243 785,295 1025,278 704,349 951,341 779,422 698,463 911,443 836,504',
    '631,694 672,593 493,647 550,730 620,815 694,885',
    '753,676 753,556 831,625 702,758 830,745 772,827',
    '1004,618 1037,402 985,492 1065,534 918,572 1110,630 913,686 1064,719 984,745',
    '1204,646 1123,451 1175,541 1273,577 1156,746 1247,746',
    '1445,599 1504,518 1364,577 1562,607 1321,678 1403,713',
    '928,946 906,814 1068,834 986,870 847,893 1065,946 773,957 852,1018 1002,1016 931,1077',
    '1157,857', '1155,968',
    '1324,915 1333,798 1244,860 1240,980 1404,1000 1319,1027',
    '1117,1170 1026,1131 1099,1060',
    '1275,1130 1193,1084 1367,1126 1205,1204 1300,1234 1387,1241',
    '1530,1171 1449,1133 1475,1261 1574,1071 1625,1171 1578,1270'
  ], arrows: [
    [1324,915,1333,798,1.5],[1324,915,1244,860,1.6],[1324,915,1240,980,1.7],[1324,915,1404,1000,2],[1324,915,1319,1027,3.4],[1117,1170,1026,1131,3.2]
  ] },

  { x: 1380, y: 1360, s: 2.178, stars: [
    '88,127 45,31 161,79 243,93 12,171 157,206 234,206 84,257 3,293 -27,-43 -37,70',
    '2,845 -48,686 -76,793 -136,869 -62,922 -53,1031 27,732 103,709 88,832 113,938 31,955',
    '142,457 10,416 87,373 170,328 258,315 221,426 61,506 189,556 112,595',
    '358,499 355,298 316,400 410,389 272,517 443,501 262,637 345,607 426,618 329,716',
    '530,314 582,227 450,287 636,324 501,424 584,409',
    '822,296 839,176 924,152 677,225 757,223 902,268 984,246 727,340 956,363 788,415 874,391',
    '1147,322 1146,174 1240,149 1074,221 1204,252 1293,244 1054,329 1245,353 1104,427 1192,439 1142,528',
    '663,565 672,439 741,506 589,518 734,634 662,694',
    '968,615 1018,441 945,499 864,500 1040,546 810,581 891,620 1092,625 902,733 1027,697 973,777',
    '254,783 190,685 171,799 339,833 196,907 275,904',
    '503,793 513,567 499,685 583,641 415,739 587,757 420,853 585,871 503,907 506,1027',
    '822,818 816,703 739,760 901,858 745,881 825,935',
    '665,947 666,825 586,990 745,1000 579,1108 663,1063',
    '168,1148 194,1025 112,1055 252,1137 132,1259 223,1247',
    '316,1217 278,1028', '17,606', '351,968', '428,971', '344,1102', '495,1154', '405,1197'
  ], arrows: [
    [503,793,513,567,4.5],[503,793,583,641,1],[503,793,415,739,1],[503,793,587,757,1],[503,793,420,853,1.8],[503,793,585,871,4],
    [503,907,506,1027,1.2],[316,1217,278,1028,1.3],[425,1090,351,968,2.6],[425,1090,405,1197,3.8],[254,783,339,833,.8],[254,783,171,799,.8],
    [530,314,636,324,.8],[168,1148,252,1137,.8],[665,947,586,990,.8]
  ], shapes: ['485,800 521,800 508,872 508,900 498,900 498,872', '423,990 431,990 441,1055 472,1115 490,1142 478,1150 458,1132 415,1118 385,1102 352,1106 352,1092 382,1088 410,1066 413,1045'] }
];
const COLORS = { pink: ['#da7ed9', '#74406f'], lime: ['#8cb900', '#4f6c0a'], cyan: ['#00c7ff', '#0d7494'], orange: ['#ff7045', '#8c3a22'], teal: ['#24966e', '#145a40'] };
const R = 11.4;
let edges = '', arrows = '', nodes = '';

for (const t of TILES) {
  const px = (x, y) => [t.x + x / t.s, t.y + y / 3];
  for (const star of t.stars) {
    const parts = star.split(' ');
    const key = COLORS[parts[0]] ? parts.shift() : '';
    const [fill, rim] = COLORS[key] || ['#000', '#000'];
    const pts = parts.map(p => px(...p.split(',').map(Number)).map(v => v.toFixed(1)));
    pts.forEach(([x, y], i) => {
      if (i) edges += `<line class="edge${key && ' soft'}" ${key && `style="stroke:${fill}"`} x1="${pts[0][0]}" y1="${pts[0][1]}" x2="${x}" y2="${y}"/>`;
      nodes += `<circle cx="${x}" cy="${y}" r="${key ? 10.6 : R}" fill="${fill}" stroke="${rim}" stroke-width="${key ? 1.8 : 0}"/>`;
    });
  }
  for (const [ax, ay, bx, by, w, key] of t.arrows || []) {
    const [x1, y1] = px(ax, ay), [x2, y2] = px(bx, by);
    const d = Math.hypot(x2 - x1, y2 - y1), ux = (x2 - x1) / d, uy = (y2 - y1) / d;
    const len = 1 + 3.6 * w, half = .6 + 1.2 * w;
    const tx = x2 - ux * R, ty = y2 - uy * R, hx = tx - ux * len, hy = ty - uy * len;
    const c = key ? COLORS[key][0] : '#000';
    arrows += `<line x1="${x1}" y1="${y1}" x2="${hx}" y2="${hy}" stroke="${c}" stroke-width="${w * .9}"/>`
      + `<polygon fill="${c}" points="${tx},${ty} ${hx - uy * half},${hy + ux * half} ${hx + uy * half},${hy - ux * half}"/>`;
  }
  for (const s of t.shapes || []) {
    arrows += `<polygon points="${s.split(' ').map(p => px(...p.split(',').map(Number)).join()).join(' ')}"/>`;
  }
}
document.getElementById('graph').innerHTML = edges + arrows + nodes;
```
